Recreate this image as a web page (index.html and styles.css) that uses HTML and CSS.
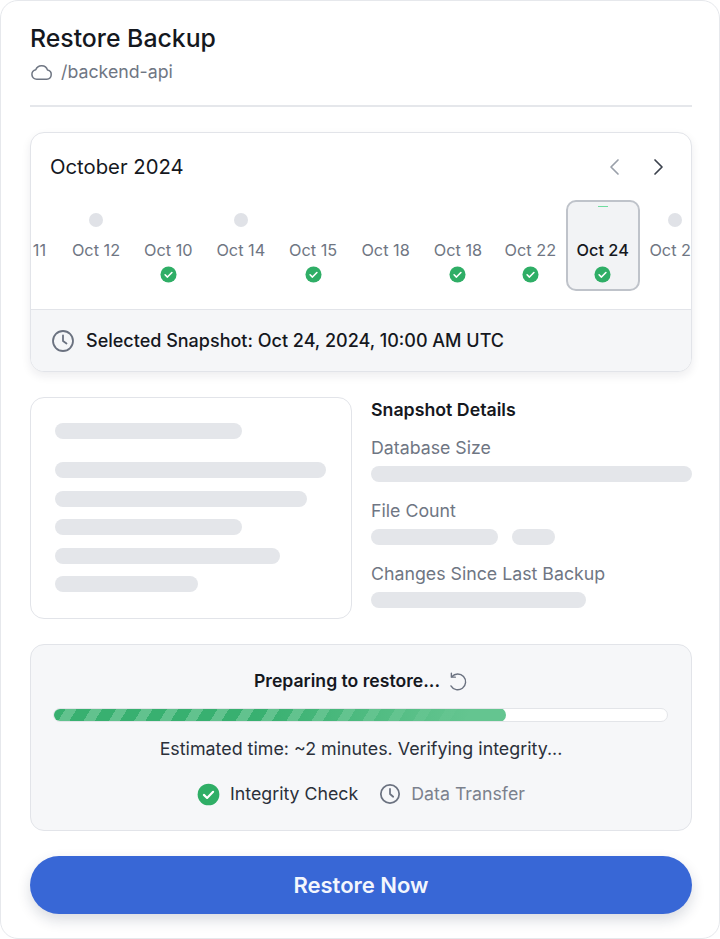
FILE: index.html
```html
<!DOCTYPE html>
<html lang="en">
<head>
<meta charset="utf-8">
<title>Restore Backup</title>
<link rel="stylesheet" href="styles.css">
</head>
<body>
<main class="shell">
  <header class="head">
    <h1 class="title">Restore Backup</h1>
    <div class="path">
      <svg class="cloud" viewBox="0 0 24 24" fill="none" stroke="currentColor" stroke-width="1.6" stroke-linecap="round" stroke-linejoin="round"><path d="M17.5 19H7a5 5 0 0 1-1-9.9A6.5 6.5 0 0 1 18.3 9.5 4.8 4.8 0 0 1 17.5 19Z"/></svg>
      <span>/backend-api</span>
    </div>
  </header>

  <section class="calendar">
    <div class="cal-top">
      <div class="month">October 2024</div>
      <div class="nav">
        <svg class="chev dim" viewBox="0 0 24 24" fill="none" stroke="currentColor" stroke-width="1.7" stroke-linecap="round" stroke-linejoin="round"><path d="M15 5l-7 7 7 7"/></svg>
        <svg class="chev" viewBox="0 0 24 24" fill="none" stroke="currentColor" stroke-width="1.7" stroke-linecap="round" stroke-linejoin="round"><path d="M9 5l7 7-7 7"/></svg>
      </div>
    </div>
    <div class="strip">
      <div class="day"><span class="dot none"></span><span class="label">Oct 11</span><span class="mark"></span></div>
      <div class="day"><span class="dot"></span><span class="label">Oct 12</span><span class="mark"></span></div>
      <div class="day"><span class="dot none"></span><span class="label">Oct 10</span><span class="mark"><svg class="check" viewBox="0 0 18 18"><circle cx="9" cy="9" r="8.5"/><path d="M5.4 9.3l2.5 2.4 4.7-4.8"/></svg></span></div>
      <div class="day"><span class="dot"></span><span class="label">Oct 14</span><span class="mark"></span></div>
      <div class="day"><span class="dot none"></span><span class="label">Oct 15</span><span class="mark"><svg class="check" viewBox="0 0 18 18"><circle cx="9" cy="9" r="8.5"/><path d="M5.4 9.3l2.5 2.4 4.7-4.8"/></svg></span></div>
      <div class="day"><span class="dot none"></span><span class="label">Oct 18</span><span class="mark"></span></div>
      <div class="day"><span class="dot none"></span><span class="label">Oct 18</span><span class="mark"><svg class="check" viewBox="0 0 18 18"><circle cx="9" cy="9" r="8.5"/><path d="M5.4 9.3l2.5 2.4 4.7-4.8"/></svg></span></div>
      <div class="day"><span class="dot none"></span><span class="label">Oct 22</span><span class="mark"><svg class="check" viewBox="0 0 18 18"><circle cx="9" cy="9" r="8.5"/><path d="M5.4 9.3l2.5 2.4 4.7-4.8"/></svg></span></div>
      <div class="day selected"><span class="glint"></span><span class="dot none"></span><span class="label">Oct 24</span><span class="mark"><svg class="check" viewBox="0 0 18 18"><circle cx="9" cy="9" r="8.5"/><path d="M5.4 9.3l2.5 2.4 4.7-4.8"/></svg></span></div>
      <div class="day"><span class="dot"></span><span class="label">Oct 25</span><span class="mark"></span></div>
    </div>
    <div class="selected-bar">
      <svg class="clock" viewBox="0 0 24 24" fill="none" stroke="currentColor" stroke-width="1.8" stroke-linecap="round" stroke-linejoin="round"><circle cx="12" cy="12" r="10"/><path d="M12 6.5V12l3.5 2.5"/></svg>
      <span>Selected Snapshot: Oct 24, 2024, 10:00 AM UTC</span>
    </div>
  </section>

  <section class="split">
    <div class="preview">
      <div class="bar w187 lead"></div>
      <div class="bar w271"></div>
      <div class="bar w252"></div>
      <div class="bar w187"></div>
      <div class="bar w225"></div>
      <div class="bar w143"></div>
    </div>
    <div class="details">
      <h2 class="details-title">Snapshot Details</h2>
      <div class="field-label">Database Size</div>
      <div class="bar full"></div>
      <div class="field-label">File Count</div>
      <div class="bar-row"><div class="bar w127"></div><div class="bar w43"></div></div>
      <div class="field-label">Changes Since Last Backup</div>
      <div class="bar w215"></div>
    </div>
  </section>

  <section class="progress">
    <div class="prep">
      <span>Preparing to restore...</span>
      <svg class="spin" viewBox="0 0 24 24" fill="none" stroke="currentColor" stroke-width="1.6" stroke-linecap="round" stroke-linejoin="round"><path d="M5.500 6.500A9 9 0 1 1 4.500 17"/><path d="M5 2.500v4.500h4.500"/></svg>
    </div>
    <div class="track"><div class="fill"></div></div>
    <div class="eta">Estimated time: ~2 minutes. Verifying integrity...</div>
    <div class="steps">
      <div class="step done">
        <svg class="check big" viewBox="0 0 18 18"><circle cx="9" cy="9" r="8.5"/><path d="M5.4 9.3l2.5 2.4 4.7-4.8"/></svg>
        <span>Integrity Check</span>
      </div>
      <div class="step wait">
        <svg class="clock small" viewBox="0 0 24 24" fill="none" stroke="currentColor" stroke-width="1.9" stroke-linecap="round" stroke-linejoin="round"><circle cx="12" cy="12" r="10"/><path d="M12 6.500V12l3.500 3"/></svg>
        <span>Data Transfer</span>
      </div>
    </div>
  </section>

  <button class="restore" type="button">Restore Now</button>
</main>
</body>
</html>
```
FILE: styles.css
```css
* { box-sizing: border-box; }
html, body { margin: 0; height: 100%; background: #ffffff; }
body { font-family: Inter, "Liberation Sans", sans-serif; color: #15181e; overflow: hidden; }

.shell {
  height: 939px;
  width: 720px;
  padding: 22px 27px 0 29px;
  border: 1px solid #e6e8ec;
  border-radius: 18px;
  background: #fff;
}

.head { height: 84px; border-bottom: 2px solid #e5e7eb; }
.title { margin: 0; font-size: 24.8px; line-height: 30px; font-weight: 500; letter-spacing: 0; }
.path { display: flex; align-items: center; gap: 8px; margin-top: 7px; font-size: 17.75px; line-height: 24px; color: #6f7683; }
.cloud { width: 23px; height: 23px; color: #6f7683; }

.calendar {
  margin-top: 25px;
  height: 240px;
  border: 1.5px solid #e2e4e9;
  border-radius: 14px;
  background: #fff;
  box-shadow: 0 4px 10px rgba(20, 30, 50, 0.08);
  overflow: hidden;
  display: flex;
  flex-direction: column;
}
.cal-top { display: flex; justify-content: space-between; align-items: center; height: 66px; padding: 2px 21px 0 19px; flex: none; }
.month { font-size: 20.3px; font-weight: 400; padding-bottom: 2px; }
.nav { display: flex; gap: 19px; color: #3c424d; }
.nav .dim { color: #9aa0aa; }
.chev { width: 24px; height: 24px; display: block; }

.strip { display: flex; flex: 1; margin-left: -43.600px; align-items: flex-start; padding-top: 1px; }
.day {
  position: relative;
  flex: 0 0 72.4px;
  height: 91px;
  display: flex;
  flex-direction: column;
  align-items: center;
  padding-top: 13px;
  color: #6f7683;
  font-size: 16.3px;
}
.dot { width: 14px; height: 14px; border-radius: 50%; background: #e0e2e7; flex: none; }
.dot.none { background: transparent; }
.label { margin-top: 13px; line-height: 20px; white-space: nowrap; }
.mark { height: 17px; margin-top: 6px; display: block; }
.check { display: block; width: 17px; height: 17px; }
.check circle { fill: #2fae66; }
.check path { fill: none; stroke: #fff; stroke-width: 1.7; stroke-linecap: round; stroke-linejoin: round; }

.selected {
  background: #f2f3f5;
  border: 2px solid #bfc3ca;
  border-radius: 10px;
  width: 74px;
  flex-basis: 74px;
  margin: 0 -0.8px;
  padding-top: 11px;
  color: #15181e;
  font-weight: 500;
}
.glint { position: absolute; top: 4px; left: 30px; width: 10px; height: 1px; background: #6fdc9f; }

.selected-bar {
  display: flex;
  align-items: center;
  gap: 11px;
  height: 62px;
  flex: none;
  padding: 0 20px;
  border-top: 1.500px solid #e2e4e9;
  background: #f5f6f8;
  font-size: 18px;
  font-weight: 500;
}
.clock { width: 24px; height: 24px; color: #6b7280; flex: none; }

.split { display: flex; gap: 19px; margin-top: 25px; height: 222px; }
.preview {
  flex: 0 0 322px;
  border: 1.500px solid #e2e4e9;
  border-radius: 14px;
  padding: 25px 23.500px;
  display: flex;
  flex-direction: column;
  gap: 12.500px;
}
.bar { height: 16px; border-radius: 8px; background: #e4e6ea; }
.lead { margin-bottom: 10.500px; }
.w187 { width: 187px; }
.w271 { width: 271px; }
.w252 { width: 252px; }
.w225 { width: 225px; }
.w143 { width: 143px; }
.w127 { width: 127px; }
.w43 { width: 43px; }
.w215 { width: 215px; }
.full { width: 100%; }

.details { flex: 1; padding-top: 1px; }
.details-title { margin: 0; font-size: 17.75px; line-height: 24px; font-weight: 600; }
.field-label { font-size: 17.75px; line-height: 24px; color: #6f7683; margin-top: 17px; margin-bottom: 6px; }
.details-title + .field-label { margin-top: 14px; }
.bar-row { display: flex; gap: 14px; }

.progress {
  margin-top: 25px;
  height: 187px;
  border: 1.500px solid #e2e4e9;
  border-radius: 14px;
  background: #f6f7f9;
  padding: 24px 22.500px 0;
  display: flex;
  flex-direction: column;
  align-items: center;
}
.prep { display: flex; align-items: center; gap: 7px; font-size: 17.6px; line-height: 24px; font-weight: 600; }
.spin { width: 21px; height: 21px; color: #6b7280; }
.track {
  width: 100%;
  height: 14px;
  margin: 15px 1px 0 -1px;
  border: 1.500px solid #e3e5e9;
  border-radius: 7px;
  background: #fff;
  overflow: hidden;
}
.fill {
  width: 454px;
  height: 14px;
  margin: -1.500px;
  border-radius: 7px;
  background:
    linear-gradient(90deg, rgba(100, 197, 144, 0) 0%, rgba(100, 197, 144, 0) 45%, rgba(100, 197, 144, 1) 92%),
    repeating-linear-gradient(122deg, #38b070 0 12px, #62c28e 12px 21.500px);
}
.eta { margin-top: 15px; font-size: 17.85px; line-height: 24px; color: #2b303a; }
.steps { display: flex; gap: 21px; margin-top: 21px; font-size: 17.75px; line-height: 24px; }
.step { display: flex; align-items: center; gap: 10px; }
.done { color: #2b303a; }
.wait { color: #7b818d; }
.check.big { width: 23px; height: 23px; }
.clock.small { width: 22px; height: 22px; }

.restore {
  display: block;
  width: 100%;
  height: 58px;
  margin-top: 25px;
  border: 0;
  border-radius: 29px;
  background: #3867d6;
  color: #f3f6fd;
  font-family: inherit;
  font-size: 22px;
  font-weight: 600;
  box-shadow: 0 6px 14px rgba(20, 30, 60, 0.16);
}
```
